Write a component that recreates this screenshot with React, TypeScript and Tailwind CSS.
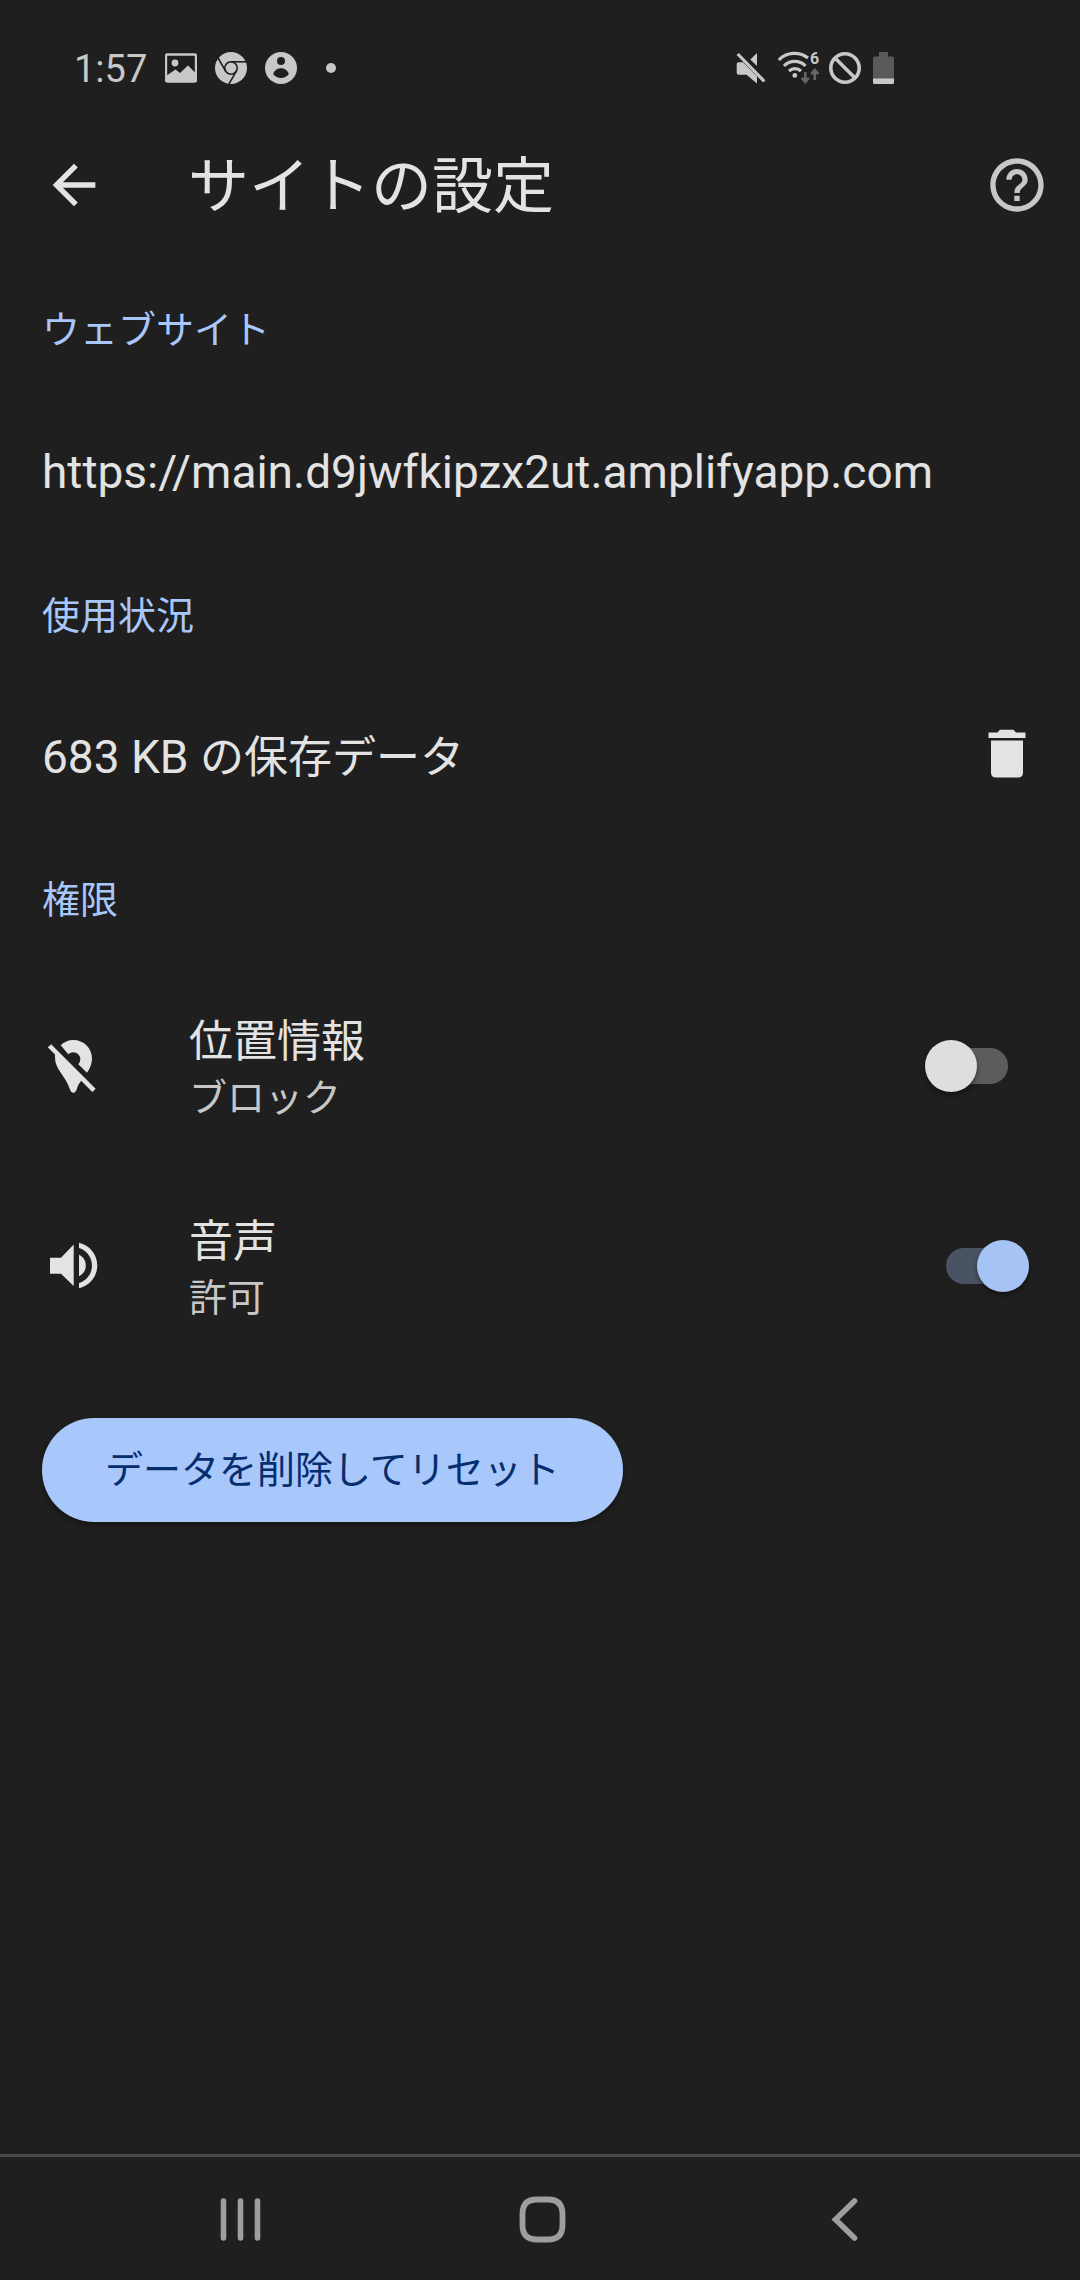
import { useState, type ReactNode } from "react";

function ImageIcon() {
  return (
    <svg width="32" height="32" viewBox="0 0 32 32" fill="none">
      <rect x="1" y="2.5" width="30" height="27" rx="1.5" stroke="#c8c8c8" strokeWidth="2.4" />
      <circle cx="10" cy="11" r="3.4" fill="#c8c8c8" />
      <path d="M1 24 L10.5 17.5 L15 21 L23 13.5 L31 21.5 V29.5 H1 Z" fill="#c8c8c8" />
    </svg>
  );
}

function ChromeIcon() {
  return (
    <svg width="32" height="32" viewBox="0 0 32 32">
      <circle cx="16" cy="16" r="16" fill="#c8c8c8" />
      <g stroke="#1f1f1f" strokeWidth="1.6" fill="none">
        <circle cx="16" cy="16" r="6.2" />
        <path d="M16 9.8 H31" />
        <path d="M16 9.8 H32" transform="rotate(120 16 16)" />
        <path d="M16 9.8 H32" transform="rotate(240 16 16)" />
      </g>
    </svg>
  );
}

function PersonIcon() {
  return (
    <svg width="32" height="32" viewBox="0 0 32 32">
      <circle cx="16" cy="16" r="16" fill="#c8c8c8" />
      <circle cx="16" cy="9" r="4" fill="#1f1f1f" />
      <path d="M8.2 22 C9.5 18 13 16.3 16 16.3 S22.5 18 23.8 22 A9.6 9.6 0 0 1 8.2 22 Z" fill="#1f1f1f" />
    </svg>
  );
}

function DotIcon() {
  return (
    <svg width="32" height="32" viewBox="0 0 32 32">
      <circle cx="16" cy="16" r="5" fill="#c8c8c8" />
    </svg>
  );
}

function MuteIcon() {
  return (
    <svg width="32" height="32" viewBox="0 0 32 32" fill="#c8c8c8">
      <path d="M2.7 2 L29.3 29.3" stroke="#c8c8c8" strokeWidth="3.2" />
      <path d="M22 1 V14 L15.3 7.5 Z" />
      <path d="M3.5 10.3 H8 L22 24.5 V31.5 L11.5 22.7 H3.5 Q1.7 22.7 1.7 21 V12 Q1.7 10.3 3.5 10.3 Z" />
    </svg>
  );
}

function WifiIcon() {
  return (
    <svg width="44" height="46" viewBox="0 -6 44 46" fill="none">
      <g stroke="#c8c8c8" strokeWidth="3.2">
        <path d="M2.8 9 A22 22 0 0 1 32 7" />
        <path d="M8 15 A15 15 0 0 1 29.5 15" />
        <path d="M13 20 A9 9 0 0 1 25 20" />
      </g>
      <circle cx="18.8" cy="24.4" r="2.4" fill="#c8c8c8" />
      <text x="34" y="13" fontSize="16" fontWeight="700" fontFamily="Roboto, sans-serif" fill="#c8c8c8">
        6
      </text>
      <g stroke="#666666" strokeWidth="2.6">
        <path d="M29.3 21 V31 M25.8 26.8 L29.3 31 L32.8 26.8" />
        <path d="M38.8 29 V19 M35.3 23.2 L38.8 19 L42.3 23.2" />
      </g>
    </svg>
  );
}

function BlockIcon() {
  return (
    <svg width="32" height="32" viewBox="0 0 32 32" fill="none" stroke="#c8c8c8" strokeWidth="3.6">
      <circle cx="16" cy="16" r="14.2" />
      <path d="M6 6 L26 26" />
    </svg>
  );
}

function BatteryIcon() {
  return (
    <svg width="28" height="34" viewBox="0 0 28 34">
      <path d="M9 1 H18 V5.5 H22 Q24 5.5 24 7.5 V28 H3 V7.5 Q3 5.5 5 5.5 H9 Z" fill="#5a5a5a" />
      <path d="M3 27.5 H24 V31.5 Q24 33 22.5 33 H4.5 Q3 33 3 31.5 Z" fill="#c8c8c8" />
    </svg>
  );
}

function BackArrowIcon() {
  return (
    <svg width="64" height="64" viewBox="0 0 24 24" fill="#e3e3e3">
      <path d="M20 11H7.83l5.59-5.59L12 4l-8 8 8 8 1.41-1.41L7.83 13H20v-2z" />
    </svg>
  );
}

function HelpIcon() {
  return (
    <svg width="64" height="64" viewBox="0 0 24 24" fill="#c7c7c7">
      <path d="M11 18h2v-2h-2v2zm1-16C6.48 2 2 6.48 2 12s4.48 10 10 10 10-4.48 10-10S17.52 2 12 2zm0 18c-4.41 0-8-3.59-8-8s3.59-8 8-8 8 3.59 8 8-3.59 8-8 8zm0-14c-2.21 0-4 1.79-4 4h2c0-1.1.9-2 2-2s2 .9 2 2c0 2-3 1.75-3 5h2c0-2.25 3-2.5 3-5 0-2.21-1.79-4-4-4z" />
    </svg>
  );
}

function TrashIcon() {
  return (
    <svg width="38" height="54" viewBox="0 3 38 54" fill="#e3e3e3" overflow="visible">
      <path d="M0.5 5.5 H9.5 L12 2.7 H25.5 L28 5.5 H37.5 V11 H0.5 Z" />
      <path d="M3 13.5 H35 V45.5 Q35 50.5 30 50.5 H8 Q3 50.5 3 45.5 Z" />
    </svg>
  );
}

function LocationOffIcon() {
  return (
    <svg width="50" height="56" viewBox="0 0 50 56" fill="#e3e3e3">
      <path d="M1.5 7.8 L46 52.3" stroke="#e3e3e3" strokeWidth="4.6" />
      <path d="M7 14 V20 C7 31 17 37 21.8 51 Q23 54.8 25.3 54.8 T28.8 51 Q30.3 46 33 43 L33 40 Z" />
      <path d="M12.7 7.3 C16 4 20.5 2 25.3 2 C35.6 2 44 10 44 20.5 C44 25.5 42 30.5 39 34.7 L30.3 26.2 A7 7 0 0 0 20.3 16.3 Z" />
    </svg>
  );
}

function SoundIcon() {
  return (
    <svg width="50" height="52" viewBox="0 0 50 52" fill="#e3e3e3">
      <path d="M2 17.7 H13 L25.7 4.5 V46 L13 33.7 H2 Z" />
      <path d="M31 14.8 C35.3 16.8 37.8 21 37.8 25.5 S35.3 34.2 31 36.2 Z" />
      <path d="M31 2.7 C41.5 5 49.3 14.5 49.3 25.5 S41.5 46 31 48.3 V43 C38.5 40.7 44 33.8 44 25.5 S38.5 10.3 31 8 Z" />
    </svg>
  );
}

function StatusBar() {
  return (
    <div className="flex h-28 items-center justify-between pt-6 pl-[74px] pr-[182px]">
      <div className="flex items-center gap-[18px]">
        <span className="pt-0.5 text-[38px] leading-[44px] text-[#c8c8c8]">1:57</span>
        <ImageIcon />
        <ChromeIcon />
        <PersonIcon />
        <DotIcon />
      </div>
      <div className="flex items-center gap-[9px]">
        <MuteIcon />
        <WifiIcon />
        <BlockIcon />
        <BatteryIcon />
      </div>
    </div>
  );
}

function SectionHeading({ children }: { children: ReactNode }) {
  return (
    <h2 className="flex h-[142px] items-center px-[42px] pt-0.5 text-[38px] leading-[56px] text-[#a8c7fa]">
      {children}
    </h2>
  );
}

type PermissionProps = {
  id: string;
  icon: ReactNode;
  title: string;
  onText: string;
  offText: string;
  initial: boolean;
};

function PermissionRow({ id, icon, title, onText, offText, initial }: PermissionProps) {
  const [on, setOn] = useState(initial);
  return (
    <div className="flex h-48 items-center pl-12 pr-[51px]">
      <span className="flex w-[141px] shrink-0">{icon}</span>
      <label htmlFor={id} className="flex min-w-0 flex-1 flex-col pt-2">
        <span className="text-[44px] leading-[56px] text-[#e3e3e3]">{title}</span>
        <span className="text-[38px] leading-[56px] text-[#c7c7c7]">{on ? onText : offText}</span>
      </label>
      <span className="relative h-[52px] w-[104px] shrink-0">
        <span
          className={
            on
              ? "absolute top-2 left-[21px] h-9 w-[77px] rounded-full bg-[#495363]"
              : "absolute top-2 left-1.5 h-9 w-[77px] rounded-full bg-[#5c5c5c]"
          }
        />
        <span
          className={
            on
              ? "absolute top-0 right-0 size-[52px] rounded-full bg-[#a5c3f5] shadow-[0_3px_5px_rgba(0,0,0,0.4)]"
              : "absolute top-0 left-0 size-[52px] rounded-full bg-[#dedede] shadow-[0_3px_5px_rgba(0,0,0,0.4)]"
          }
        />
        <input
          id={id}
          type="checkbox"
          role="switch"
          checked={on}
          onChange={(e) => setOn(e.target.checked)}
          className="absolute inset-0 cursor-pointer appearance-none"
        />
      </span>
    </div>
  );
}

function NavigationBar() {
  return (
    <nav className="grid h-[126px] grid-cols-3 items-center border-t-[3px] border-[#484848] pt-0.5 pl-[90px] pr-[84px]">
      <button type="button" aria-label="履歴" className="flex h-full items-center justify-center">
        <svg width="48" height="48" viewBox="0 0 48 48" stroke="#9e9e9e" strokeWidth="5.6" strokeLinecap="round">
          <path d="M6.5 5 V42 M23.5 5 V42 M40.5 5 V42" />
        </svg>
      </button>
      <button type="button" aria-label="ホーム" className="flex h-full items-center justify-center">
        <svg width="48" height="48" viewBox="0 0 48 48" fill="none" stroke="#9e9e9e" strokeWidth="5.8">
          <path d="M18 3.5 H29 Q43.5 3.5 43.5 18 V29 Q43.5 43.5 29 43.5 H18 Q3.5 43.5 3.5 29 V18 Q3.5 3.5 18 3.5 Z" />
        </svg>
      </button>
      <button type="button" aria-label="戻る" className="flex h-full items-center justify-center">
        <svg width="48" height="48" viewBox="0 0 48 48" fill="none" stroke="#9e9e9e" strokeWidth="5.6" strokeLinecap="round">
          <path d="M33.5 5 L14.5 23.5 L33.5 42" />
        </svg>
      </button>
    </nav>
  );
}

export default function App() {
  return (
    <div className="flex min-h-screen flex-col bg-[#1f1f1f] font-['Roboto','Noto_Sans_CJK_JP',sans-serif]" lang="ja">
      <StatusBar />
      <header className="flex h-[146px] items-center pl-[42px] pr-[31px]">
        <button type="button" aria-label="前の画面に戻る" className="mr-[82px] shrink-0">
          <BackArrowIcon />
        </button>
        <h1 className="min-w-0 flex-1 pt-1 text-[61px] leading-[80px] text-[#e3e3e3]">サイトの設定</h1>
        <button type="button" aria-label="ヘルプ" className="shrink-0">
          <HelpIcon />
        </button>
      </header>

      <main className="flex-1">
        <section>
          <SectionHeading>ウェブサイト</SectionHeading>
          <p className="flex h-36 items-center px-[42px] text-[46px] leading-[56px] text-[#e3e3e3]">
            https://main.d9jwfkipzx2ut.amplifyapp.com
          </p>
        </section>

        <section>
          <SectionHeading>使用状況</SectionHeading>
          <div className="flex h-[142px] items-center justify-between pl-[42px] pr-[54px]">
            <p className="text-[46px] leading-[56px] text-[#e3e3e3]">
              683 KB <span className="text-[44px]">の保存データ</span>
            </p>
            <button type="button" aria-label="保存データを削除">
              <TrashIcon />
            </button>
          </div>
        </section>

        <section>
          <SectionHeading>権限</SectionHeading>
          <div className="flex flex-col gap-2">
            <PermissionRow
              id="location"
              icon={<LocationOffIcon />}
              title="位置情報"
              onText="許可"
              offText="ブロック"
              initial={false}
            />
            <PermissionRow
              id="sound"
              icon={<SoundIcon />}
              title="音声"
              onText="許可"
              offText="ブロック"
              initial={true}
            />
          </div>
        </section>

        <button
          type="button"
          className="mt-14 ml-[42px] flex h-[104px] items-center rounded-full bg-[#a8c7fa] px-[63px] text-[38px] leading-[56px] text-[#062e6f] shadow-[0_3px_5px_rgba(0,0,0,0.35)]"
        >
          データを削除してリセット
        </button>
      </main>

      <NavigationBar />
    </div>
  );
}
